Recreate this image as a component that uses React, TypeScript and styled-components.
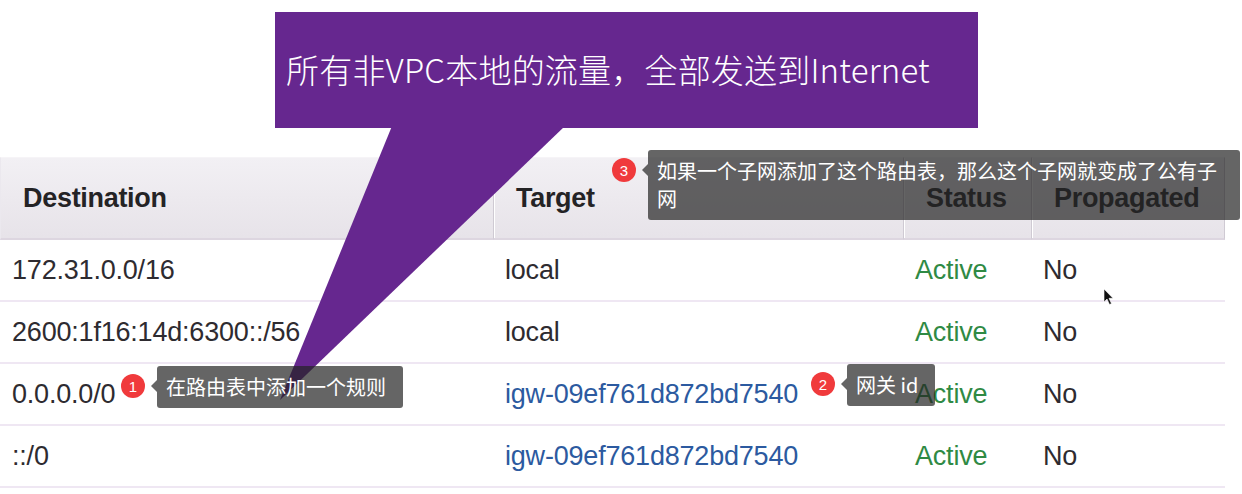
import React from 'react';
import styled, { createGlobalStyle } from 'styled-components';

const GlobalStyle = createGlobalStyle`
  html, body { margin: 0; padding: 0; background: #ffffff; }
  body { font-family: "Liberation Sans", Arial, Helvetica, sans-serif; }
`;

const Page = styled.div`
  position: relative;
  width: 1242px;
  height: 494px;
  overflow: hidden;
  background: #ffffff;
  padding-top: 157px;
  box-sizing: border-box;
`;

const Table = styled.div`
  width: 1225px;
  display: grid;
  grid-template-columns: 493px 410px 128px 194px;
`;

const HeaderCell = styled.div<{ $first?: boolean; $last?: boolean }>`
  height: 83px;
  box-sizing: border-box;
  display: flex;
  align-items: center;
  padding-left: 22px;
  background: linear-gradient(#f2f0f4, #e7e3e9);
  border-top: 1px solid #f6f4f7;
  border-bottom: 2px solid #ddd6e0;
  border-left: 1px solid ${(p) => (p.$first ? '#ebe8ee' : '#cfcad3')};
  border-right: ${(p) => (p.$last ? '1px solid #cfcad3' : 'none')};
  box-shadow: ${(p) => (p.$first ? 'none' : 'inset 1px 0 0 #ffffff')};
  font-weight: 700;
  font-size: 27px;
  color: #242325;
  letter-spacing: -0.3px;
`;

const Cell = styled.div<{ $tone?: 'text' | 'link' | 'ok' }>`
  height: 62px;
  box-sizing: border-box;
  display: flex;
  align-items: center;
  padding-left: 12px;
  border-bottom: 2px solid #efe7f3;
  font-size: 27px;
  letter-spacing: -0.2px;
  color: ${(p) =>
    p.$tone === 'link' ? '#2c5aa0' : p.$tone === 'ok' ? '#2f8a44' : '#2e2b30'};
`;

const CalloutBox = styled.div`
  position: absolute;
  left: 275px;
  top: 12px;
  width: 703px;
  height: 116px;
  box-sizing: border-box;
  padding-left: 11px;
  padding-bottom: 3px;
  display: flex;
  align-items: center;
  background: #66278f;
  color: #ffffff;
  font-family: "Noto Sans CJK SC", "Noto Sans", sans-serif;
  font-weight: 300;
  font-size: 33px;
  letter-spacing: 0.2px;
  white-space: nowrap;
`;

const CalloutTail = styled.svg`
  position: absolute;
  left: 270px;
  top: 126px;
  width: 300px;
  height: 280px;
  overflow: visible;
`;

const Annotation = styled.div<{ $x: number; $y: number }>`
  position: absolute;
  left: ${(p) => p.$x}px;
  top: ${(p) => p.$y}px;
  display: flex;
  align-items: flex-start;
  gap: 12px;
`;

const Badge = styled.div`
  width: 24px;
  height: 24px;
  margin-top: 8px;
  border-radius: 50%;
  background: #f03a3c;
  color: #ffffff;
  font-family: "Liberation Sans", Arial, sans-serif;
  font-size: 15px;
  display: flex;
  align-items: center;
  justify-content: center;
  flex-shrink: 0;
`;

const Bubble = styled.div<{ $width?: number }>`
  position: relative;
  box-sizing: border-box;
  width: ${(p) => (p.$width ? `${p.$width}px` : 'auto')};
  padding: 7px 17px 7px 9px;
  background: rgba(36, 36, 36, 0.7);
  border-radius: 3px;
  color: #ffffff;
  font-family: "Noto Sans CJK SC", "Noto Sans", sans-serif;
  font-size: 20px;
  line-height: 28px;
  white-space: ${(p) => (p.$width ? 'normal' : 'nowrap')};
  &::before {
    content: '';
    position: absolute;
    left: -6px;
    top: 14px;
    border-style: solid;
    border-width: 6px 6px 6px 0;
    border-color: transparent rgba(36, 36, 36, 0.7) transparent transparent;
  }
`;

const Cursor = styled.svg`
  position: absolute;
  left: 1103px;
  top: 288px;
  width: 12px;
  height: 18px;
`;

const rows = [
  { dest: '172.31.0.0/16', target: 'local', link: false },
  { dest: '2600:1f16:14d:6300::/56', target: 'local', link: false },
  { dest: '0.0.0.0/0', target: 'igw-09ef761d872bd7540', link: true },
  { dest: '::/0', target: 'igw-09ef761d872bd7540', link: true },
];

export default function App() {
  return (
    <Page>
      <GlobalStyle />
      <Table>
        <HeaderCell $first>Destination</HeaderCell>
        <HeaderCell>Target</HeaderCell>
        <HeaderCell>Status</HeaderCell>
        <HeaderCell $last>Propagated</HeaderCell>
        {rows.map((r) => (
          <React.Fragment key={r.dest}>
            <Cell>{r.dest}</Cell>
            <Cell $tone={r.link ? 'link' : 'text'}>{r.target}</Cell>
            <Cell $tone="ok">Active</Cell>
            <Cell>No</Cell>
          </React.Fragment>
        ))}
      </Table>

      <CalloutTail viewBox="0 0 300 280">
        <polygon points="122,0 295,0 10,274" fill="#66278f" />
      </CalloutTail>
      <CalloutBox>所有非VPC本地的流量，全部发送到Internet</CalloutBox>

      <Cursor viewBox="0 0 12 18">
        <path d="M1 1 L1 14 L4 11 L6.5 16.5 L8.5 15.6 L6 10.3 L10 10.3 Z" fill="#111" stroke="#fff" strokeWidth="0.6" />
      </Cursor>

      <Annotation $x={121} $y={366}>
        <Badge>1</Badge>
        <Bubble>在路由表中添加一个规则</Bubble>
      </Annotation>
      <Annotation $x={811} $y={364}>
        <Badge>2</Badge>
        <Bubble>网关 id</Bubble>
      </Annotation>
      <Annotation $x={612} $y={150}>
        <Badge>3</Badge>
        <Bubble $width={592}>如果一个子网添加了这个路由表，那么这个子网就变成了公有子网</Bubble>
      </Annotation>
    </Page>
  );
}
